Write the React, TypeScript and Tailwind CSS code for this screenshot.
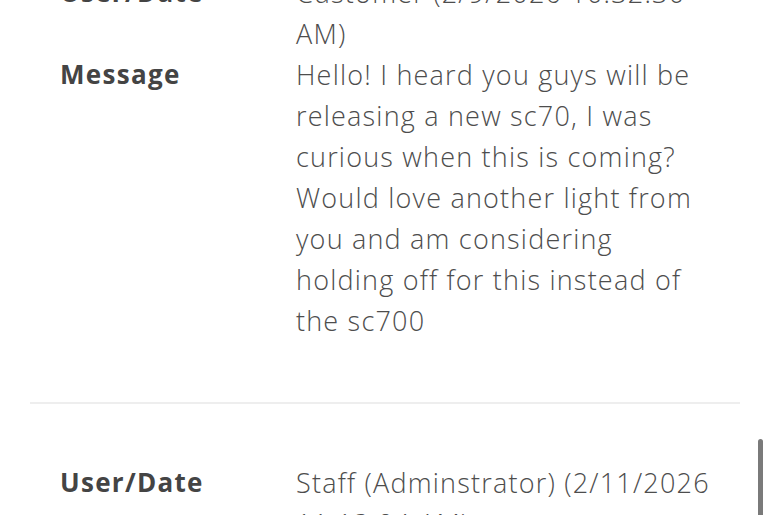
import React from "react";

type Row = { label: string; value: string };

function Entry({ rows }: { rows: Row[] }) {
  return (
    <div className="grid grid-cols-[236px_1fr] px-[30px]">
      {rows.map((r) => (
        <React.Fragment key={r.label}>
          <div className="text-[26px] font-bold text-[#444444] tracking-[1.3px]">{r.label}</div>
          <div className="whitespace-pre text-[27px] font-light text-[#4d4d4d] tracking-[1.2px]">
            {r.value}
          </div>
        </React.Fragment>
      ))}
    </div>
  );
}

export default function App() {
  return (
    <div className="relative h-[515px] w-[770px] overflow-hidden bg-white font-['Open_Sans',sans-serif] leading-[41px]">
      <div className="mx-[30px] -mt-[28px]">
        <div className="pb-[61px]">
          <Entry
            rows={[
              { label: "User/Date", value: "Customer (2/9/2026 10:32:30\nAM)" },
              {
                label: "Message",
                value:
                  "Hello! I heard you guys will be\nreleasing a new sc70, I was\ncurious when this is coming?\nWould love another light from\nyou and am considering\nholding off for this instead of\nthe sc700",
              },
            ]}
          />
        </div>
        <div className="h-[2px] bg-[#eeeeee]" />
        <div className="pt-[58px]">
          <Entry
            rows={[
              { label: "User/Date", value: "Staff (Adminstrator) (2/11/2026\n11:13:04 AM)" },
            ]}
          />
        </div>
      </div>
      <div className="absolute right-[7px] top-[439px] h-[90px] w-[5px] rounded-full bg-[#7a7a7a]" />
    </div>
  );
}
